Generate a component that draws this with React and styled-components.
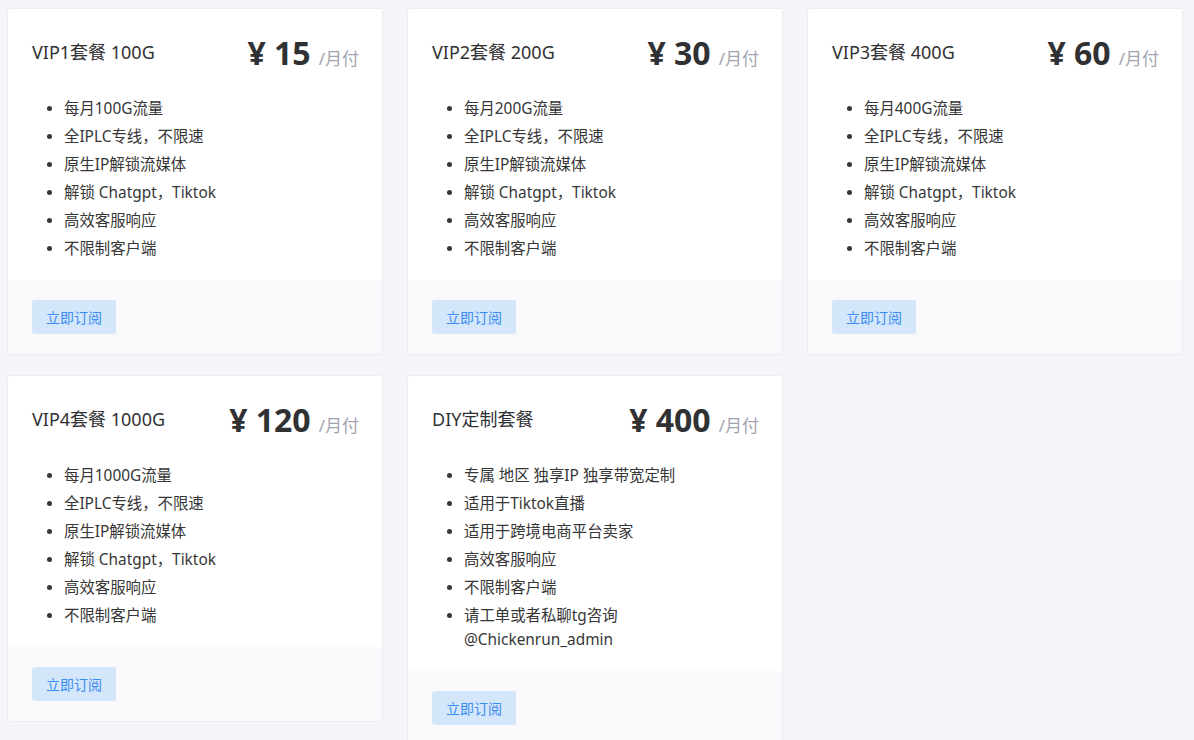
import React from 'react';
import styled, { createGlobalStyle } from 'styled-components';

const GlobalStyle = createGlobalStyle`
  html, body {
    margin: 0;
    padding: 0;
    background: #f4f5fa;
    font-family: "Noto Sans", "Noto Sans CJK SC", sans-serif;
    color: #303133;
  }
`;

const plans = [
  {
    name: 'VIP1套餐 100G',
    price: 15,
    features: ['每月100G流量', '全IPLC专线，不限速', '原生IP解锁流媒体', '解锁 Chatgpt，Tiktok', '高效客服响应', '不限制客户端'],
  },
  {
    name: 'VIP2套餐 200G',
    price: 30,
    features: ['每月200G流量', '全IPLC专线，不限速', '原生IP解锁流媒体', '解锁 Chatgpt，Tiktok', '高效客服响应', '不限制客户端'],
  },
  {
    name: 'VIP3套餐 400G',
    price: 60,
    features: ['每月400G流量', '全IPLC专线，不限速', '原生IP解锁流媒体', '解锁 Chatgpt，Tiktok', '高效客服响应', '不限制客户端'],
  },
  {
    name: 'VIP4套餐 1000G',
    price: 120,
    features: ['每月1000G流量', '全IPLC专线，不限速', '原生IP解锁流媒体', '解锁 Chatgpt，Tiktok', '高效客服响应', '不限制客户端'],
  },
  {
    name: 'DIY定制套餐',
    price: 400,
    features: ['专属 地区 独享IP 独享带宽定制', '适用于Tiktok直播', '适用于跨境电商平台卖家', '高效客服响应', '不限制客户端', '请工单或者私聊tg咨询 @Chickenrun_admin'],
  },
];

const Page = styled.div`
  display: grid;
  grid-template-columns: repeat(3, 374px);
  column-gap: 26px;
  row-gap: 22px;
  align-items: start;
  padding: 9px 8px;
`;

const Card = styled.div`
  background: #fff;
  border: 1px solid #ebedf3;
  border-radius: 3px;
  overflow: hidden;
  margin: -1px;
`;

const Body = styled.div`
  padding: 24px 24px 17px;
`;

const Header = styled.div`
  display: flex;
  justify-content: space-between;
  align-items: center;
  height: 40px;
`;

const Title = styled.div`
  font-size: 18px;
  line-height: 24px;
  color: #303133;
  margin-top: -2px;
`;

const Price = styled.div`
  font-size: 32px;
  line-height: 40px;
  font-weight: 700;
  color: #303133;
  margin-right: -1px;
  margin-top: 6px;
`;

const Unit = styled.span`
  font-size: 17px;
  font-weight: 400;
  color: #a0a4ae;
  margin-left: 8px;
`;

const Features = styled.ul`
  margin: 22px 0 0;
  padding-left: 32px;
`;

const Feature = styled.li`
  font-size: 15.4px;
  line-height: 24px;
  padding: 2px 0;
  color: #363636;
  &::marker {
    font-size: 14px;
  }
`;

const Footer = styled.div`
  background: #f9f9fc;
  padding: 20px 24px;
`;

const Button = styled.button`
  height: 34px;
  width: 84px;
  border: none;
  border-radius: 3px;
  background: #d4e6fa;
  color: #3b8cf2;
  font-family: inherit;
  font-size: 14px;
  cursor: pointer;
`;

function PlanCard({ plan }) {
  return (
    <Card>
      <Body>
        <Header>
          <Title>{plan.name}</Title>
          <Price>
            ¥ {plan.price}
            <Unit>/月付</Unit>
          </Price>
        </Header>
        <Features>
          {plan.features.map((f) => (
            <Feature key={f}>{f}</Feature>
          ))}
        </Features>
      </Body>
      <Footer>
        <Button>立即订阅</Button>
      </Footer>
    </Card>
  );
}

export default function App() {
  return (
    <>
      <GlobalStyle />
      <Page>
        {plans.map((p) => (
          <PlanCard key={p.name} plan={p} />
        ))}
      </Page>
    </>
  );
}
